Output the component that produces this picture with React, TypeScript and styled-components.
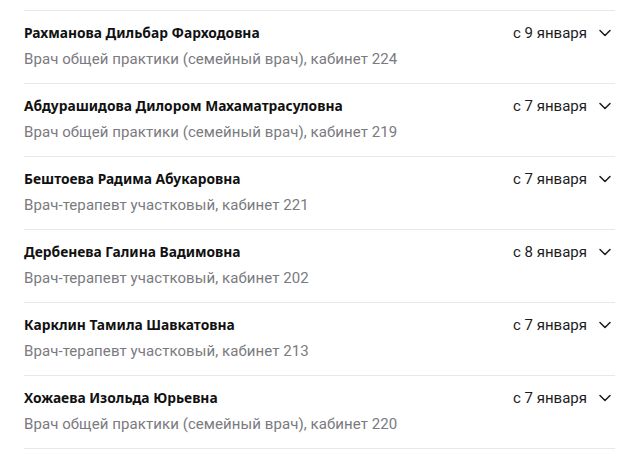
import styled, { createGlobalStyle } from "styled-components"

const Global = createGlobalStyle`
    body{
        margin: 0;
        background: #fff;
    }
`

const doctors = [
    { name: "Рахманова Дильбар Фарходовна", role: "Врач общей практики (семейный врач), кабинет 224", date: "с 9 января" },
    { name: "Абдурашидова Дилором Махаматрасуловна", role: "Врач общей практики (семейный врач), кабинет 219", date: "с 7 января" },
    { name: "Бештоева Радима Абукаровна", role: "Врач-терапевт участковый, кабинет 221", date: "с 7 января" },
    { name: "Дербенева Галина Вадимовна", role: "Врач-терапевт участковый, кабинет 202", date: "с 8 января" },
    { name: "Карклин Тамила Шавкатовна", role: "Врач-терапевт участковый, кабинет 213", date: "с 7 января" },
    { name: "Хожаева Изольда Юрьевна", role: "Врач общей практики (семейный врач), кабинет 220", date: "с 7 января" },
]

function Chevron(){
    return(
        <svg width="12" height="8" viewBox="0 0 12 8" fill="none">
            <path d="M1 1.5L6 6.5L11 1.5" stroke="#1c1c1e" strokeWidth="1.5" strokeLinecap="round" strokeLinejoin="round" />
        </svg>
    )
}

function App(){
    return(
        <List>
            <Global />
            {doctors.map((d) => (
                <Row key={d.name}>
                    <Info>
                        <Name>{d.name}</Name>
                        <Role>{d.role}</Role>
                    </Info>
                    <Side>
                        <DateText>{d.date}</DateText>
                        <Chevron />
                    </Side>
                </Row>
            ))}
            <Bottom />
        </List>
    )
}

export default App

const List = styled.div`
    padding: 10px 14px 0 24px;
    display: flex;
    flex-direction: column;
`

const Row = styled.div`
    display: flex;
    justify-content: space-between;
    align-items: flex-start;
    border-top: 1px solid #e8e8ec;
    height: 72px;
`

const Info = styled.div`
    display: flex;
    flex-direction: column;
    padding-top: 14px;
`

const Name = styled.div`
    font-family: "Noto Sans", sans-serif;
    font-weight: 700;
    font-size: 13.8px;
    line-height: 16px;
    color: #111;
`

const Role = styled.div`
    font-family: Roboto, sans-serif;
    font-size: 15px;
    line-height: 18px;
    letter-spacing: 0.08px;
    margin-top: 9px;
    color: #7a7a80;
`

const Side = styled.div`
    display: flex;
    align-items: center;
    gap: 12px;
    padding-top: 14px;
    padding-right: 4px;
`

const DateText = styled.span`
    font-family: Roboto, sans-serif;
    font-size: 15px;
    line-height: 16px;
    color: #1c1c1e;
`

const Bottom = styled.div`
    border-top: 1px solid #e8e8ec;
`
